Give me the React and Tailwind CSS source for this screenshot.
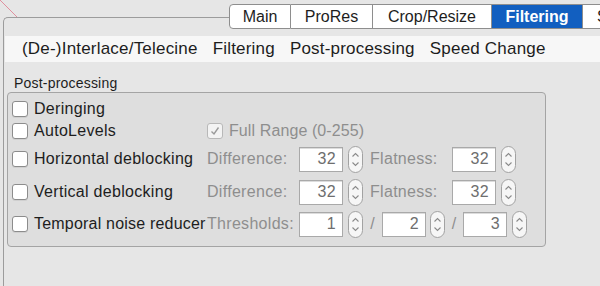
import React from "react";

function Stepper() {
  return (
    <svg width="15" height="27" viewBox="0 0 15 27" className="shrink-0">
      <rect x="0.5" y="0.5" width="14" height="26" rx="7" fill="#f6f6f6" stroke="#a2a2a2" />
      <path d="M4.5 10.5 L7.5 7.5 L10.5 10.5" fill="none" stroke="#8a8a8a" strokeWidth="1.1" />
      <path d="M4.5 16.5 L7.5 19.5 L10.5 16.5" fill="none" stroke="#8a8a8a" strokeWidth="1.1" />
    </svg>
  );
}

function NumInput({ value }) {
  return (
    <div className="flex h-[25px] w-[44px] shrink-0 items-center justify-end border border-[#a9a9a9] bg-white pr-[6px] text-[#6e6e6e] shadow-[inset_0_1px_0_#dcdcdc]">
      {value}
    </div>
  );
}

function Checkbox({ checked, disabled }) {
  return (
    <div
      className={
        "flex h-[16px] w-[16px] shrink-0 items-center justify-center rounded-[3px] border " +
        (disabled ? "border-[#b8b8b8] bg-[#f3f3f3]" : "border-[#8c8c8c] bg-white shadow-[0_1px_0_#cfcfcf]")
      }
    >
      {checked && (
        <svg width="12" height="12" viewBox="0 0 12 12">
          <path d="M2.5 6.5 L5 9 L9.5 2.5" fill="none" stroke="#9a9a9a" strokeWidth="1.4" />
        </svg>
      )}
    </div>
  );
}

function Tab({ label, w, first, active, left }) {
  return (
    <div
      className={
        "flex h-full shrink-0 items-center overflow-hidden whitespace-nowrap border-y border-r border-[#8e8e8e] " +
        (first ? "rounded-l-[4px] border-l " : "") +
        (left ? "justify-start pl-[14px] " : "justify-center ") +
        (active ? "bg-[#125fc0] font-bold text-white" : "bg-white text-[#1d1d1d]")
      }
      style={{ width: w }}
    >
      {label}
    </div>
  );
}

export default function App() {
  return (
    <div className="relative h-[286px] w-[600px] overflow-hidden bg-[#e6e6e6] font-['Liberation_Sans',Arial,sans-serif] text-[#1d1d1d]">
      <svg className="absolute left-0 top-0" width="20" height="20" viewBox="0 0 20 20">
        <line x1="0" y1="0" x2="17" y2="17" stroke="#e0909e" strokeWidth="1" />
      </svg>
      <div className="ml-[3px] mt-[17px] flex h-[269px] flex-col rounded-tl-[5px] border-l border-t border-[#9c9c9c]">
        <div className="-mt-[14px] ml-[225px] flex h-[25px] text-[16px]">
          <Tab label="Main" w={62} first />
          <Tab label="ProRes" w={82} />
          <Tab label="Crop/Resize" w={119} />
          <Tab label="Filtering" w={91} active />
          <Tab label="Subtitles" w={80} left />
        </div>
        <div className="ml-[1px] mt-[7px] flex h-[26px] items-center gap-[15px] bg-[#f7f7f7] pl-[17px] text-[17px] tracking-[0.2px] whitespace-nowrap">
          <span>(De-)Interlace/Telecine</span>
          <span>Filtering</span>
          <span>Post-processing</span>
          <span>Speed Change</span>
        </div>
        <div className="ml-[10px] mt-[13px] h-[16px] text-[14px] leading-[16px] tracking-[0.2px]">Post-processing</div>
        <div className="ml-[3px] mt-[1px] flex h-[155px] w-[539px] flex-col rounded-[4px] border border-[#a4a4a4] bg-[#dedede] pl-[4px] pt-[5px] text-[16px] tracking-[0.3px] whitespace-nowrap">
          <div className="flex h-[22px] items-center">
            <div className="flex w-[195px] items-center gap-[6px]">
              <Checkbox />
              <span>Deringing</span>
            </div>
          </div>
          <div className="flex h-[22px] items-center">
            <div className="flex w-[195px] items-center gap-[6px]">
              <Checkbox />
              <span>AutoLevels</span>
            </div>
            <div className="flex items-center gap-[6px] text-[#8e8e8e] tracking-[0.1px]">
              <Checkbox checked disabled />
              <span>Full Range (0-255)</span>
            </div>
          </div>
          <div className="flex h-[34px] items-center">
            <div className="flex w-[195px] items-center gap-[6px]">
              <Checkbox />
              <span>Horizontal deblocking</span>
            </div>
            <span className="w-[92px] text-[#8e8e8e]">Difference:</span>
            <NumInput value="32" />
            <div className="ml-[5px]"><Stepper /></div>
            <span className="ml-[7px] w-[82px] text-[#8e8e8e]">Flatness:</span>
            <NumInput value="32" />
            <div className="ml-[5px]"><Stepper /></div>
          </div>
          <div className="flex h-[32px] items-center">
            <div className="flex w-[195px] items-center gap-[6px]">
              <Checkbox />
              <span>Vertical deblocking</span>
            </div>
            <span className="w-[92px] text-[#8e8e8e]">Difference:</span>
            <NumInput value="32" />
            <div className="ml-[5px]"><Stepper /></div>
            <span className="ml-[7px] w-[82px] text-[#8e8e8e]">Flatness:</span>
            <NumInput value="32" />
            <div className="ml-[5px]"><Stepper /></div>
          </div>
          <div className="flex h-[32px] items-center">
            <div className="flex w-[195px] items-center gap-[6px]">
              <Checkbox />
              <span className="tracking-[0.2px]">Temporal noise reducer</span>
            </div>
            <span className="w-[92px] text-[#8e8e8e]">Thresholds:</span>
            <NumInput value="1" />
            <div className="ml-[5px]"><Stepper /></div>
            <span className="w-[19px] text-center text-[#8e8e8e]">/</span>
            <NumInput value="2" />
            <div className="ml-[4px]"><Stepper /></div>
            <span className="w-[18px] text-center text-[#8e8e8e]">/</span>
            <NumInput value="3" />
            <div className="ml-[5px]"><Stepper /></div>
          </div>
        </div>
      </div>
    </div>
  );
}
